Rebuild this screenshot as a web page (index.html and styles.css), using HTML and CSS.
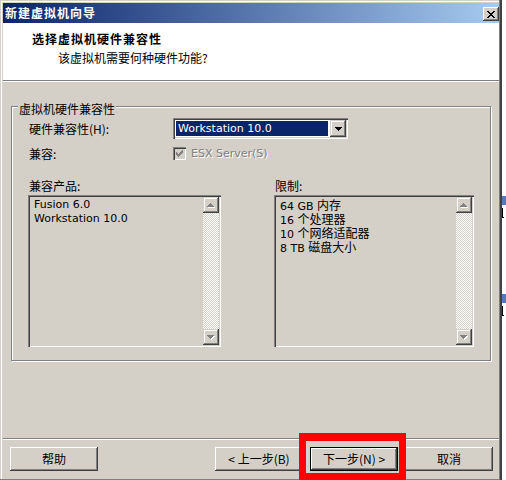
FILE: index.html
```html
<!DOCTYPE html>
<html lang="zh-CN">
<head>
<meta charset="utf-8">
<title>新建虚拟机向导</title>
<link rel="stylesheet" href="styles.css">
</head>
<body>
<div class="screen">
  <div class="window">
    <div class="titlebar">
      <span class="title">新建虚拟机向导</span>
      <button class="close" aria-label="关闭">
        <svg width="8" height="7" viewBox="0 0 8 7" shape-rendering="crispEdges"><path fill="#000" d="M0 0h2v1H0z M6 0h2v1H6z M1 1h2v1H1z M5 1h2v1H5z M2 2h4v1H2z M3 3h2v1H3z M2 4h4v1H2z M1 5h2v1H1z M5 5h2v1H5z M0 6h2v1H0z M6 6h2v1H6z"/></svg>
      </button>
    </div>
    <div class="header">
      <div class="h-title">选择虚拟机硬件兼容性</div>
      <div class="h-sub">该虚拟机需要何种硬件功能?</div>
    </div>
    <div class="body">
      <div class="group">
        <div class="legend">虚拟机硬件兼容性</div>
        <div class="row">
          <span class="row-label">硬件兼容性(H):</span>
          <div class="combo">
            <div class="combo-value">Workstation 10.0</div>
            <div class="combo-btn">
              <svg width="7" height="4" viewBox="0 0 7 4" shape-rendering="crispEdges"><path fill="#000" d="M0 0h7v1H0z M1 1h5v1H1z M2 2h3v1H2z M3 3h1v1H3z"/></svg>
            </div>
          </div>
        </div>
        <div class="row">
          <span class="row-label">兼容:</span>
          <div class="check-wrap">
            <div class="checkbox">
              <svg width="7" height="7" viewBox="0 0 7 7" shape-rendering="crispEdges"><path fill="#808080" d="M6 0h1v1H6z M5 1h2v1H5z M0 2h1v1H0z M4 2h3v1H4z M0 3h2v1H0z M3 3h3v1H3z M0 4h5v1H0z M1 5h3v1H1z M2 6h1v1H2z"/></svg>
            </div>
            <span class="check-label">ESX Server(S)</span>
          </div>
        </div>
        <div class="lists">
          <div class="col col-left">
            <div class="col-label">兼容产品:</div>
            <div class="listbox">
              <div class="items">
                <div class="item">Fusion 6.0</div>
                <div class="item">Workstation 10.0</div>
              </div>
              <div class="scroll">
                <div class="sb-btn">
                  <svg width="8" height="5" viewBox="0 0 8 5" shape-rendering="crispEdges"><path fill="#fff" d="M4 1h1v1H4z M3 2h3v1H3z M2 3h5v1H2z M1 4h7v1H1z"/><path fill="#808080" d="M3 0h1v1H3z M2 1h3v1H2z M1 2h5v1H1z M0 3h7v1H0z"/></svg>
                </div>
                <div class="sb-track"></div>
                <div class="sb-btn">
                  <svg width="8" height="5" viewBox="0 0 8 5" shape-rendering="crispEdges"><path fill="#fff" d="M1 1h7v1H1z M2 2h5v1H2z M3 3h3v1H3z M4 4h1v1H4z"/><path fill="#808080" d="M0 0h7v1H0z M1 1h5v1H1z M2 2h3v1H2z M3 3h1v1H3z"/></svg>
                </div>
              </div>
            </div>
          </div>
          <div class="col col-right">
            <div class="col-label">限制:</div>
            <div class="listbox">
              <div class="items">
                <div class="item">64 GB <span class="cjk">内存</span></div>
                <div class="item">16 <span class="cjk">个处理器</span></div>
                <div class="item">10 <span class="cjk">个网络适配器</span></div>
                <div class="item">8 TB <span class="cjk">磁盘大小</span></div>
              </div>
              <div class="scroll">
                <div class="sb-btn">
                  <svg width="8" height="5" viewBox="0 0 8 5" shape-rendering="crispEdges"><path fill="#fff" d="M4 1h1v1H4z M3 2h3v1H3z M2 3h5v1H2z M1 4h7v1H1z"/><path fill="#808080" d="M3 0h1v1H3z M2 1h3v1H2z M1 2h5v1H1z M0 3h7v1H0z"/></svg>
                </div>
                <div class="sb-track"></div>
                <div class="sb-btn">
                  <svg width="8" height="5" viewBox="0 0 8 5" shape-rendering="crispEdges"><path fill="#fff" d="M1 1h7v1H1z M2 2h5v1H2z M3 3h3v1H3z M4 4h1v1H4z"/><path fill="#808080" d="M0 0h7v1H0z M1 1h5v1H1z M2 2h3v1H2z M3 3h1v1H3z"/></svg>
                </div>
              </div>
            </div>
          </div>
        </div>
      </div>
    </div>
    <div class="footer">
      <button class="btn">帮助</button>
      <div class="nav">
        <button class="btn">&lt; 上一步(B)</button>
        <button class="btn btn-default">下一步(N) &gt;</button>
        <button class="btn">取消</button>
      </div>
    </div>
  </div>
  <div class="backdrop">
    <div class="d-icon d-icon-1"></div>
    <div class="d-mark"></div>
    <div class="d-icon d-icon-2"></div>
    <div class="d-mark"></div>
  </div>
  <div class="highlight"></div>
</div>
</body>
</html>
```

FILE: styles.css
```css
html, body {
  margin: 0;
  padding: 0;
}
body {
  background: #fff;
  font-family: "Noto Sans CJK SC", sans-serif;
  font-size: 12px;
  color: #000;
}
.screen {
  position: relative;
  display: flex;
  width: 506px;
  height: 480px;
  overflow: hidden;
}
.window {
  width: 502px;
  height: 480px;
  flex: none;
  box-sizing: border-box;
  padding: 3px 3px 0 3px;
  background: #D4D0C8;
  display: flex;
  flex-direction: column;
  box-shadow: inset -2px 0 #404040, inset -3px 0 #808080, inset 0 -1px #808080, inset 1px 1px #D4D0C8, inset 2px 2px #fff;
}
.titlebar {
  height: 20px;
  flex: none;
  display: flex;
  align-items: center;
  justify-content: space-between;
  padding-left: 2px;
  background: linear-gradient(to right, #0A246A, #A6CAF0);
}
.title {
  color: #fff;
  font-weight: 700;
  letter-spacing: 1px;
  line-height: 14px;
}
.close {
  width: 16px;
  height: 14px;
  padding: 0;
  margin-top: 2px;
  border: 0;
  background: #D4D0C8;
  display: flex;
  align-items: center;
  justify-content: center;
  box-shadow: inset -1px -1px #404040, inset 1px 1px #fff, inset -2px -2px #808080, inset 2px 2px #D4D0C8;
}
.header {
  height: 58px;
  flex: none;
  box-sizing: border-box;
  background: #fff;
  border-bottom: 1px solid #808080;
  padding: 9px 0 0 29px;
}
.h-title {
  font-weight: 700;
  letter-spacing: 1px;
  line-height: 14px;
}
.h-sub {
  margin: 5px 0 0 26px;
  line-height: 14px;
}
.body {
  flex: 1;
  border-top: 1px solid #fff;
  padding: 24px 0 0 8px;
}
.group {
  position: relative;
  width: 480px;
  box-sizing: border-box;
  border: 1px solid #808080;
  box-shadow: inset 1px 1px #fff, 1px 1px #fff;
  padding: 11px 0 13px 0;
}
.legend {
  position: absolute;
  top: -5px;
  left: 6px;
  padding: 0 1px;
  background: #D4D0C8;
  line-height: 14px;
}
.row {
  display: flex;
  align-items: center;
  height: 21px;
  padding-left: 17px;
}
.row + .row {
  margin-top: 4px;
}
.row-label {
  width: 144px;
  flex: none;
  line-height: 14px;
}
.combo {
  width: 175px;
  height: 21px;
  box-sizing: border-box;
  padding: 2px;
  background: #fff;
  display: flex;
  box-shadow: inset 1px 1px #808080, inset 2px 2px #404040, inset -1px -1px #fff, inset -2px -2px #D4D0C8;
}
.combo-value {
  flex: 1;
  margin: 1px 2px 1px 1px;
  padding-left: 2px;
  background: #0A246A;
  color: #fff;
  font-family: "DejaVu Sans", sans-serif;
  font-size: 11px;
  line-height: 15px;
  white-space: nowrap;
}
.combo-btn {
  width: 16px;
  flex: none;
  background: #D4D0C8;
  display: flex;
  align-items: center;
  justify-content: center;
  box-shadow: inset -1px -1px #404040, inset 1px 1px #D4D0C8, inset -2px -2px #808080, inset 2px 2px #fff;
}
.check-wrap {
  display: flex;
  align-items: center;
}
.checkbox {
  width: 13px;
  height: 13px;
  box-sizing: border-box;
  background: #D4D0C8;
  display: flex;
  align-items: center;
  justify-content: center;
  box-shadow: inset 1px 1px #808080, inset 2px 2px #404040, inset -1px -1px #fff, inset -2px -2px #D4D0C8;
}
.check-label {
  margin-left: 5px;
  color: #808080;
  text-shadow: 1px 1px #fff;
  font-family: "DejaVu Sans", sans-serif;
  font-size: 11px;
  line-height: 14px;
}
.lists {
  display: flex;
  gap: 53px;
  margin-top: 15px;
  padding-left: 16px;
}
.col {
  display: flex;
  flex-direction: column;
}
.col-left {
  width: 193px;
}
.col-right {
  width: 200px;
}
.col-label {
  line-height: 14px;
  padding-left: 1px;
  margin-bottom: 2px;
}
.listbox {
  height: 152px;
  box-sizing: border-box;
  padding: 2px;
  display: flex;
  background: #D4D0C8;
  box-shadow: inset 1px 1px #808080, inset 2px 2px #404040, inset -1px -1px #fff, inset -2px -2px #D4D0C8;
}
.items {
  flex: 1;
  padding: 1px 4px;
  font-family: "DejaVu Sans", sans-serif;
  font-size: 11px;
  line-height: 14px;
  white-space: nowrap;
}
.item {
  height: 14px;
  overflow: visible;
}
.cjk {
  font-family: "Noto Sans CJK SC", sans-serif;
  font-size: 12px;
  line-height: 14px;
}
.scroll {
  width: 16px;
  flex: none;
  display: flex;
  flex-direction: column;
}
.sb-btn {
  height: 16px;
  flex: none;
  background: #D4D0C8;
  display: flex;
  align-items: center;
  justify-content: center;
  box-shadow: inset -1px -1px #404040, inset 1px 1px #D4D0C8, inset -2px -2px #808080, inset 2px 2px #fff;
}
.sb-track {
  flex: 1;
  background-color: #fff;
  background-image: conic-gradient(#D4D0C8 25%, #fff 0 50%, #D4D0C8 0 75%, #fff 0);
  background-size: 2px 2px;
}
.footer {
  flex: none;
  height: 42px;
  box-sizing: border-box;
  border-top: 1px solid #808080;
  box-shadow: inset 0 1px #fff;
  padding: 8px 6px 0 7px;
  display: flex;
  justify-content: space-between;
  align-items: flex-start;
}
.nav {
  display: flex;
  gap: 7px;
}
.btn {
  width: 88px;
  height: 24px;
  box-sizing: border-box;
  padding: 0;
  border: 0;
  background: #D4D0C8;
  color: #000;
  font-family: "Noto Sans CJK SC", sans-serif;
  font-size: 12px;
  line-height: 14px;
  box-shadow: inset -1px -1px #404040, inset 1px 1px #fff, inset -2px -2px #808080, inset 2px 2px #D4D0C8;
}
.btn-default {
  box-shadow: inset 0 0 0 1px #000, inset -2px -2px #404040, inset 2px 2px #fff, inset -3px -3px #808080, inset 3px 3px #D4D0C8;
}
.backdrop {
  flex: 1;
  background: #fff;
  overflow: hidden;
}
.d-icon {
  height: 9px;
  background: #4F7BBF;
}
.d-icon-1 {
  margin-top: 196px;
}
.d-icon-2 {
  margin-top: 76px;
}
.d-mark {
  width: 2px;
  height: 10px;
  margin-top: 3px;
  border-left: 1px solid #000;
  border-bottom: 1px solid #000;
  box-sizing: border-box;
}
.highlight {
  position: absolute;
  left: 299px;
  top: 433px;
  width: 107px;
  height: 48px;
  box-sizing: border-box;
  border: solid #f00;
  border-width: 8px 7px;
}
```
